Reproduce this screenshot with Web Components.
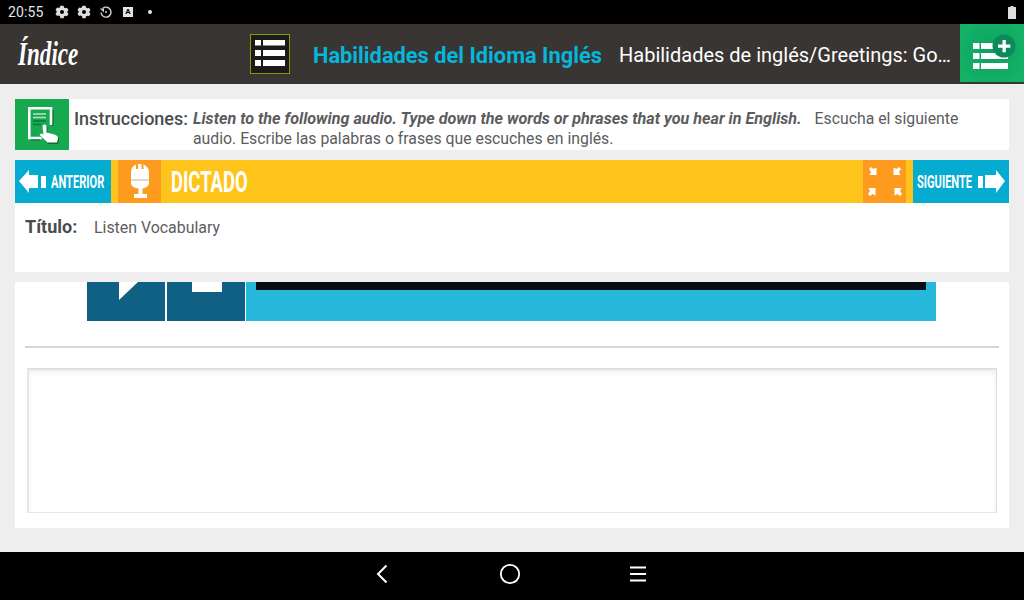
<!DOCTYPE html>
<html lang="es">
<head>
<meta charset="utf-8">
<title>Dictado</title>
<style>
  html, body { margin: 0; padding: 0; width: 1024px; height: 600px; overflow: hidden; }
  body { display: flex; flex-direction: column; background: #eeeeee; font-family: Roboto, "Liberation Sans", sans-serif; }
  main { flex: 1; display: flex; flex-direction: column; padding: 15px 15px 0; min-height: 0; }
</style>
</head>
<body>
<status-bar></status-bar>
<top-header></top-header>
<main>
  <instruction-card></instruction-card>
  <activity-bar></activity-bar>
  <title-panel></title-panel>
  <exercise-panel></exercise-panel>
</main>
<nav-bar></nav-bar>

<script>
const listIcon = `<svg width="32" height="32" viewBox="0 0 32 32" fill="#fff">
  <rect x="1" y="2" width="6" height="5.500"/><rect x="9" y="2" width="22" height="5.500"/>
  <rect x="1" y="12" width="6" height="6"/><rect x="9" y="12" width="22" height="6"/>
  <rect x="1" y="22" width="6" height="6"/><rect x="9" y="22" width="22" height="6"/>
</svg>`

class StatusBar extends HTMLElement {
  constructor() {
    super()
    const gear = `<svg width="14" height="14" viewBox="0 0 14 14"><path fill="#dedede" fill-rule="evenodd" d="M5.400.8h3.200l.4 1.700 1.300.7 1.700-.5 1.500 2.600-1.200 1.200v1l1.200 1.200-1.500 2.600-1.700-.5-1.300.7-.4 1.700H5.400L5 11.300l-1.300-.7-1.700.5L.5 8.500l1.200-1.200v-1L.5 5.100 2 2.500l1.700.5L5 2.300zM7 5a2 2 0 1 0 0 4 2 2 0 0 0 0-4z"/></svg>`
    this.attachShadow({ mode: 'open' }).innerHTML = `
      <style>
        :host { display: flex; align-items: center; height: 24px; background: #000; color: #e4e4e4; font: 14px Roboto, sans-serif; padding: 0 8px; box-sizing: border-box; flex: none; }
        .time { width: 47px; letter-spacing: .15px; }
        .icons { display: flex; align-items: center; gap: 8px; flex: 1; }
        svg { display: block; }
        .a { width: 10px; height: 10px; background: #e4e4e4; color: #000; font: bold 8px/10px Roboto, sans-serif; text-align: center; margin-left: 2px; }
        .dot { width: 4px; height: 4px; border-radius: 50%; background: #e4e4e4; margin-left: 7px; }
      </style>
      <span class="time">20:55</span>
      <div class="icons">
        ${gear}${gear}
        <svg width="14" height="14" viewBox="0 0 14 14" fill="none" stroke="#cfcfcf" stroke-width="1.400"><path d="M3.800 3.300A5 5 0 1 1 2 7.500"/><path d="M.8 3.600h4.200V7.400" stroke="none" fill="#cfcfcf"/><circle cx="7" cy="7" r="1" fill="#cfcfcf" stroke="none"/></svg>
        <span class="a">A</span>
        <span class="dot"></span>
      </div>
      <svg width="8" height="13" viewBox="0 0 8 13"><path fill="#dedede" d="M2.500 0h3v1H7.500a.5.5 0 0 1 .5.500V12.500a.5.500 0 0 1-.5.500H.5a.5.500 0 0 1-.5-.5V1.500A.5.500 0 0 1 .5 1H2.500z"/></svg>
    `
  }
}

class TopHeader extends HTMLElement {
  constructor() {
    super()
    this.attachShadow({ mode: 'open' }).innerHTML = `
      <style>
        :host { display: flex; align-items: flex-start; height: 60px; background: #393532; color: #fff; font-family: Roboto, sans-serif; flex: none; }
        .brand { width: 250px; padding-left: 18px; box-sizing: border-box; flex: none; height: 60px; }
        .brand span { display: inline-block; font: italic bold 33px/60px "Liberation Serif", serif; transform: scaleX(.7); transform-origin: left center; }
        .menu { width: 40px; height: 40px; margin-top: 10px; box-sizing: border-box; border: 1px solid #7f9f0a; background: #1d1b1a; display: flex; align-items: center; justify-content: center; flex: none; }
        .menu svg { margin-left: -1px; }
        h1 { margin: 0 0 0 23px; font: 700 21.800px/63px Roboto, sans-serif; color: #06b6dc; width: 306px; white-space: nowrap; flex: none; }
        .crumb { font: 20px/62px Roboto, sans-serif; width: 333px; white-space: nowrap; overflow: hidden; text-overflow: ellipsis; flex: none; }
        .add { margin-left: 8px; width: 64px; height: 58px; flex: none; background: radial-gradient(circle at center, #0e9f62, #14b166 80%); }
      </style>
      <div class="brand"><span>Índice</span></div>
      <div class="menu">${listIcon}</div>
      <h1>Habilidades del Idioma Inglés</h1>
      <div class="crumb">Habilidades de inglés/Greetings: Good morning</div>
      <div class="add">
        <svg width="64" height="58" viewBox="0 0 64 58">
          <g fill="#fff">
            <rect x="13" y="19" width="6.500" height="6"/><rect x="21" y="19" width="27" height="6"/>
            <rect x="13" y="29" width="6.500" height="6"/><rect x="21" y="29" width="27" height="6"/>
            <rect x="13" y="39" width="6.500" height="6"/><rect x="21" y="39" width="27" height="6"/>
          </g>
          <circle cx="44" cy="22" r="11.500" fill="#0c8a5b"/>
          <path fill="#fff" d="M42.500 16h3.300v4.500h4.500v3.300h-4.500v4.500h-3.300v-4.500H38v-3.300h4.500z"/>
        </svg>
      </div>
    `
  }
}

class InstructionCard extends HTMLElement {
  constructor() {
    super()
    const hand = 'M27.500 27.500a2 2 0 0 1 4 0v6l8 2q3.500 1 3.500 4l-1 4h-9.500l-8-7.500 2-1.800 2 1.500z'
    this.attachShadow({ mode: 'open' }).innerHTML = `
      <style>
        :host { display: flex; height: 51px; background: #fff; color: #5c5c5e; font-family: Roboto, sans-serif; flex: none; }
        .icon { width: 54px; height: 51px; background: #16a950; flex: none; }
        .label { font: 500 18px/20px Roboto, sans-serif; color: #4c4c4e; margin: 10px 0 0 5px; width: 119px; flex: none; white-space: nowrap; }
        .text { font: 15.800px/20px Roboto, sans-serif; padding-top: 10px; width: 780px; flex: none; }
        b { font-weight: 700; font-style: italic; font-size: 16.150px; margin-right: 9px; }
      </style>
      <div class="icon">
        <svg width="54" height="51" viewBox="0 0 54 51">
          <path d="M37.500 11v16M25 40.500H16" fill="none" stroke="#0a6b33" stroke-width="2"/>
          <path d="M27 39H14.300V9.300H36V26" fill="none" stroke="#fff" stroke-width="2.600"/>
          <path d="M18 15h13M18 18.500h13" stroke="#b5e6c4" stroke-width="1.400"/>
          <path d="M18 22h13M18 25.500h8" stroke="#0a7a3b" stroke-width="1.400"/>
          <path d="${hand}" fill="#0a6b33" transform="translate(1 1.500)"/>
          <path d="${hand}" fill="#fff"/>
        </svg>
      </div>
      <div class="label">Instrucciones:</div>
      <div class="text"><b>Listen to the following audio. Type down the words or phrases that you hear in English.</b> Escucha el siguiente audio. Escribe las palabras o frases que escuches en inglés.</div>
    `
  }
}

class ActivityBar extends HTMLElement {
  constructor() {
    super()
    const corner = 'M0 2L2 0 4.500 2 7.500 .5V8H.5L2 5z'
    this.attachShadow({ mode: 'open' }).innerHTML = `
      <style>
        :host { display: flex; height: 43px; margin-top: 10px; background: #ffc41c; color: #fff; font-family: Roboto, sans-serif; flex: none; }
        .nav { width: 96px; flex: none; background: #05abd0; display: flex; align-items: center; }
        .nav svg { flex: none; display: block; }
        .cond { display: inline-block; font-weight: 700; font-size: 18px; white-space: nowrap; transform-origin: left center; }
        .nav .cond { transform: scaleX(.615); }
        .orange { width: 43px; flex: none; background: #fc9b1e; }
        .orange svg { display: block; }
        .mic { margin-left: 7px; }
        h2 { margin: 0 0 0 10px; flex: 1; font: 700 29px/44px Roboto, sans-serif; }
        h2 .cond { font-size: 29px; transform: scaleX(.635); }
        .full { margin-right: 7px; }
      </style>
      <div class="nav">
        <svg width="32" height="43" viewBox="0 0 32 43" fill="#fff" style="margin-left:4px"><path d="M0 21L10 10v5h9v13h-9v5z"/><rect x="22" y="16" width="5" height="12"/></svg>
        <span class="cond">ANTERIOR</span>
      </div>
      <div class="orange mic">
        <svg width="43" height="43" viewBox="0 0 43 43">
          <path fill="#fff" d="M13 12c0-3.500 1.800-6 5-7.500V9h2V4h3.500v5h2V4.500c3 1.500 5.500 4 5.500 7.500v11c0 3-3 5-6.500 5.500V34H29v4H16v-4h4.500v-5.500C16 28 13 26 13 23z"/>
          <rect x="13" y="19.500" width="18" height="1" fill="#c9b48c"/>
        </svg>
      </div>
      <h2><span class="cond">DICTADO</span></h2>
      <div class="orange full">
        <svg width="43" height="43" viewBox="0 0 43 43" fill="#fff">
          <path d="${corner}" transform="translate(6 7)"/>
          <path d="${corner}" transform="translate(38 7) scale(-1 1)"/>
          <path d="${corner}" transform="translate(5 36) scale(1 -1)"/>
          <path d="${corner}" transform="translate(39 36) scale(-1 -1)"/>
        </svg>
      </div>
      <div class="nav">
        <span class="cond" style="margin-left:4px;width:61px">SIGUIENTE</span>
        <svg width="31" height="43" viewBox="0 0 31 43" fill="#fff"><rect x="0" y="16" width="5" height="12"/><path d="M7 15h11v-5l9 11-9 12v-5H7z"/></svg>
      </div>
    `
  }
}

class TitlePanel extends HTMLElement {
  constructor() {
    super()
    this.attachShadow({ mode: 'open' }).innerHTML = `
      <style>
        :host { display: flex; height: 69px; background: #fff; padding: 14px 0 0 10px; box-sizing: border-box; color: #5c5c5e; font-family: Roboto, sans-serif; flex: none; }
        .k { font: 700 18px/20px Roboto, sans-serif; color: #4c4c4e; width: 69px; flex: none; }
        .v { font: 15.900px/21px Roboto, sans-serif; }
      </style>
      <div class="k">Título:</div>
      <div class="v">Listen Vocabulary</div>
    `
  }
}

class ExercisePanel extends HTMLElement {
  constructor() {
    super()
    this.attachShadow({ mode: 'open' }).innerHTML = `
      <style>
        :host { display: block; height: 246px; margin-top: 10px; background: #fff; padding: 0 10px; box-sizing: border-box; flex: none; overflow: hidden; }
        .player { display: flex; height: 39px; margin: 0 63px 0 62px; gap: 2px; }
        .btn { width: 78px; flex: none; background: #0f6082; }
        .btn svg { display: block; }
        .track { flex: 1; margin-left: -1px; background: #25b8da; padding: 0 10px; }
        .bar { height: 8px; background: #080d14; }
        hr { margin: 25px 0 0; height: 2px; border: 0; background: #d6d6d6; }
        .area { margin: 20px 2px 0; height: 145px; box-sizing: border-box; border: 1px solid #e6e6e6; border-top: 2px solid #e0e0e0; border-left: 2px solid #e6e6e6; border-right-color: #dcdcdc; box-shadow: inset 0 3px 6px -1px rgba(0,0,0,.07); }
      </style>
      <div class="player">
        <div class="btn"><svg width="78" height="18" viewBox="0 0 78 18"><path d="M32 0h19L32 18z" fill="#fff"/></svg></div>
        <div class="btn"><svg width="78" height="10" viewBox="0 0 78 10"><rect x="25" y="0" width="30" height="10" fill="#fff"/></svg></div>
        <div class="track"><div class="bar"></div></div>
      </div>
      <hr>
      <div class="area"></div>
    `
  }
}

class NavBar extends HTMLElement {
  constructor() {
    super()
    this.attachShadow({ mode: 'open' }).innerHTML = `
      <style>
        :host { display: flex; height: 48px; box-sizing: border-box; padding: 0 4px 4px 0; background: #000; align-items: center; justify-content: center; gap: 106px; flex: none; }
        svg { display: block; }
      </style>
      <svg width="22" height="22" viewBox="0 0 22 22" fill="none" stroke="#fff" stroke-width="2"><path d="M15.500 2.500L7 11l8.500 8.500"/></svg>
      <svg width="22" height="22" viewBox="0 0 22 22" fill="none" stroke="#fff" stroke-width="1.800"><circle cx="11" cy="11" r="9.200"/></svg>
      <svg width="22" height="22" viewBox="0 0 22 22" fill="none" stroke="#fff" stroke-width="2"><path d="M3 4.500h16M3 11h16M3 17.500h16"/></svg>
    `
  }
}

customElements.define('status-bar', StatusBar)
customElements.define('top-header', TopHeader)
customElements.define('instruction-card', InstructionCard)
customElements.define('activity-bar', ActivityBar)
customElements.define('title-panel', TitlePanel)
customElements.define('exercise-panel', ExercisePanel)
customElements.define('nav-bar', NavBar)
</script>
</body>
</html>
